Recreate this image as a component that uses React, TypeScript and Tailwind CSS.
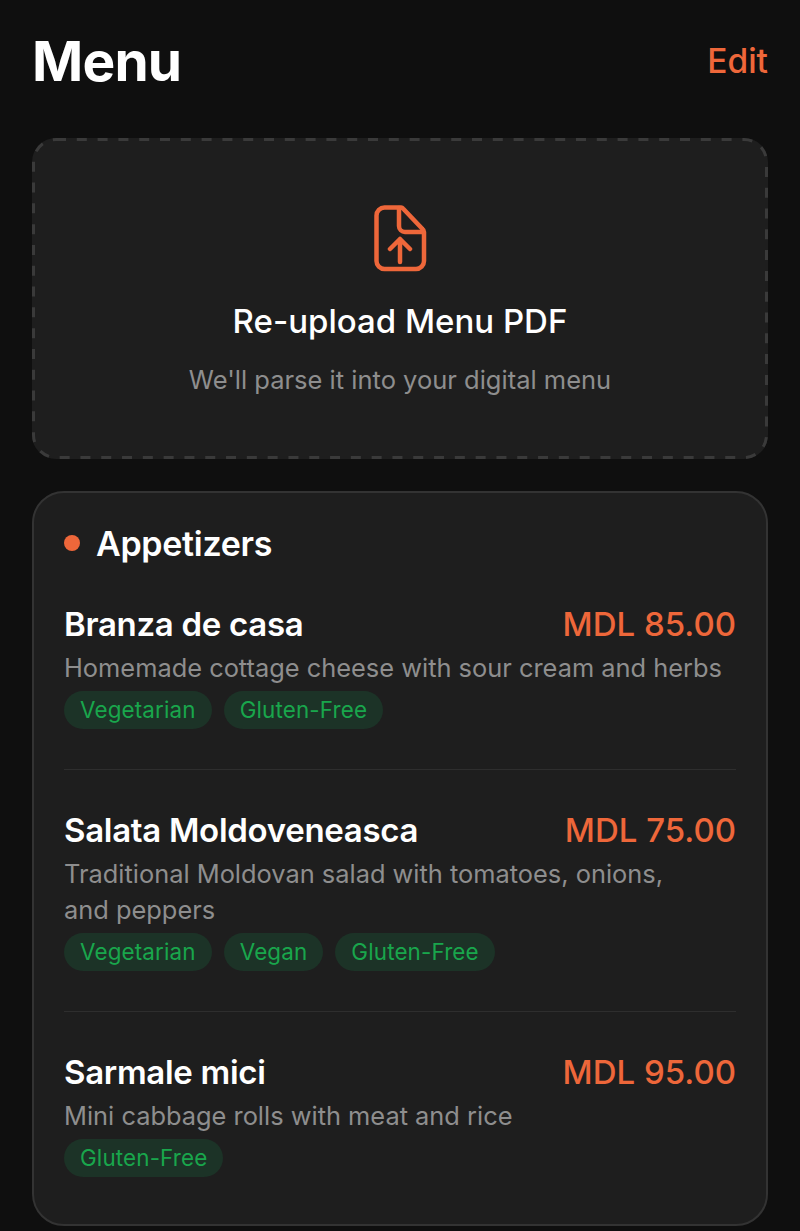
import React from 'react';

const items = [
  {
    name: 'Branza de casa',
    price: 'MDL 85.00',
    desc: 'Homemade cottage cheese with sour cream and herbs',
    tags: ['Vegetarian', 'Gluten-Free'],
  },
  {
    name: 'Salata Moldoveneasca',
    price: 'MDL 75.00',
    desc: 'Traditional Moldovan salad with tomatoes, onions,\nand peppers',
    tags: ['Vegetarian', 'Vegan', 'Gluten-Free'],
  },
  {
    name: 'Sarmale mici',
    price: 'MDL 95.00',
    desc: 'Mini cabbage rolls with meat and rice',
    tags: ['Gluten-Free'],
  },
];

const MenuRow: React.FC<{ item: (typeof items)[number]; last: boolean }> = ({ item, last }) => (
  <div className={last ? '' : 'border-b border-[#2e2e2e] pb-[40px] mb-[43px]'}>
    <div className="flex items-center justify-between h-[36px]">
      <span className="text-[33px] font-semibold text-white tracking-[-0.3px]">{item.name}</span>
      <span className="text-[33px] font-medium text-[#ee673a]">{item.price}</span>
    </div>
    <p className="mt-[7px] text-[25.4px] leading-[36px] text-[#8e8e8e] whitespace-pre-line">{item.desc}</p>
    <div className="mt-[5px] flex gap-[12px]">
      {item.tags.map((tag) => (
        <span
          key={tag}
          className="h-[38px] px-[16px] flex items-center rounded-full bg-[#1c3327] text-[22.4px] tracking-[0.15px] text-[#19a64c]"
        >
          {tag}
        </span>
      ))}
    </div>
  </div>
);

export default function App() {
  return (
    <div className="w-[800px] h-[1231px] overflow-hidden bg-[#0f0f0f] px-[32px] font-['Inter',sans-serif]">
      {/* Header */}
      <div className="flex items-center justify-between pt-[28px] h-[138px] pb-[44px]">
        <h1 className="text-[55px] font-bold text-white tracking-[-0.8px] leading-none">Menu</h1>
        <button className="text-[33.5px] font-medium text-[#ee673a]">Edit</button>
      </div>

      {/* Upload */}
      <div className="relative h-[321px] rounded-[24px] bg-[#1e1e1e] flex flex-col items-center">
        {/* dashes are longer than a css dashed border gives */}
        <svg className="absolute inset-0" width="736" height="321" fill="none">
          <rect
            x="1.5"
            y="1.5"
            width="733"
            height="318"
            rx="22.5"
            stroke="#3a3a3a"
            strokeWidth="3"
            strokeDasharray="10 10.8"
          />
        </svg>
        <svg
          className="mt-[65px]"
          width="64"
          height="72"
          viewBox="0 0 64 72"
          fill="none"
          stroke="#ee673a"
          strokeWidth="4.5"
          strokeLinecap="round"
          strokeLinejoin="round"
        >
          <path d="M16.500 4.500H33a3 3 0 0 1 2 1L54.500 26a4 4 0 0 1 1.500 3V58a8 8 0 0 1-8 8H16.500a8 8 0 0 1-8-8V12.500a8 8 0 0 1 8-8z" />
          <path d="M31 5V23a6 6 0 0 0 6 6H55" />
          <path d="M32 59V36M22 46l10-10 10 10" />
        </svg>
        <div className="mt-[24px] text-[33px] font-medium text-white leading-[44px]">Re-upload Menu PDF</div>
        <div className="mt-[19px] text-[25.5px] text-[#8e8e8e] leading-[36px]">
          We'll parse it into your digital menu
        </div>
      </div>

      {/* Appetizers */}
      <div className="mt-[32px] h-[735px] rounded-[32px] border-2 border-[#333333] bg-[#1e1e1e] px-[30px] pt-[28px]">
        <div className="flex items-center gap-[16px] h-[44px] mb-[42px]">
          <span className="w-[16px] h-[16px] rounded-full bg-[#ee673a]" />
          <span className="text-[34px] font-semibold text-white tracking-[-0.3px]">Appetizers</span>
        </div>
        {items.map((item, i) => (
          <MenuRow key={item.name} item={item} last={i === items.length - 1} />
        ))}
      </div>
    </div>
  );
}
